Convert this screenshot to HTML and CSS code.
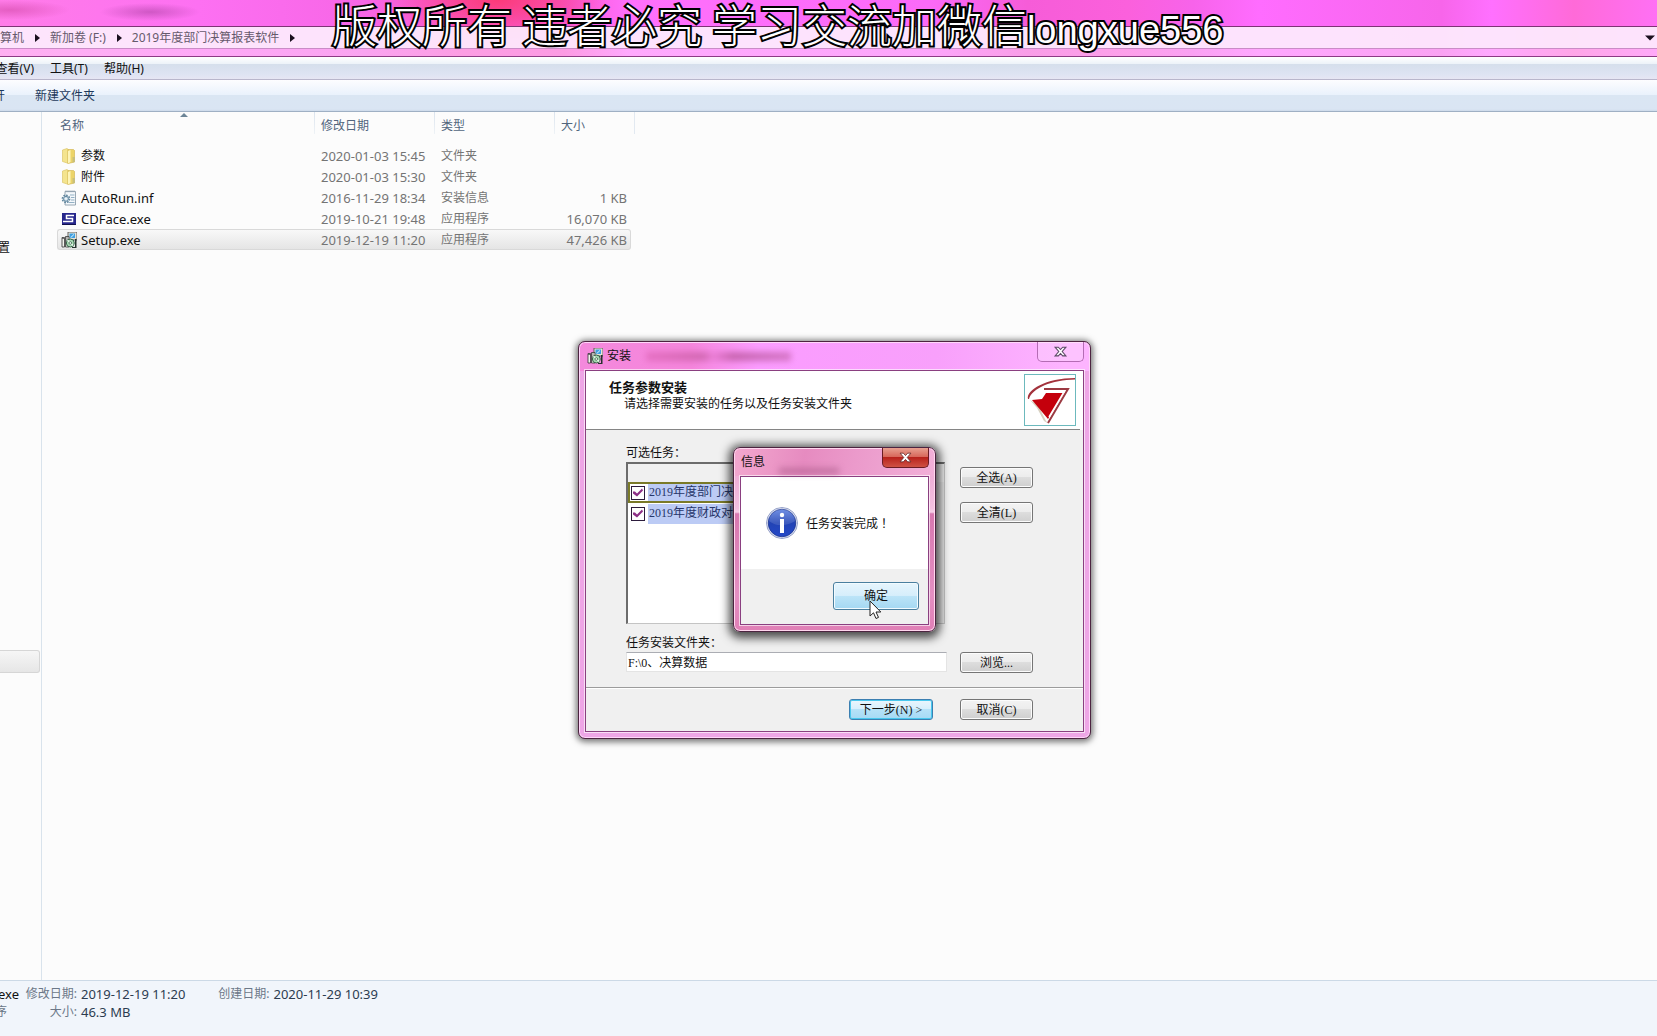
FILE: index.html
```html
<!DOCTYPE html>
<html lang="zh-CN">
<head>
<meta charset="utf-8">
<title>2019年度部门决算报表软件</title>
<link rel="stylesheet" href="styles.css">
</head>
<body>
<svg class="defs" aria-hidden="true">
  <symbol id="setup" viewBox="0 0 16 16">
    <rect x="7" y="0" width="9" height="8" fill="#e8e4d8" stroke="#444" stroke-width=".8"/>
    <rect x="8.5" y="1.5" width="5.5" height="4.5" fill="#3f9fe0"/>
    <path d="M9 5.5 13 1.8V3L10.5 5.5Z" fill="#bfe4fa"/>
    <path d="M14 7v8h-3v1h4.5V7Z" fill="#26332e"/>
    <path d="M1 5.5h2.5V15H1ZM4.5 4.5H8V15H4.5Z" fill="#f3f3ee" stroke="#333" stroke-width=".8"/>
    <path d="M1 6.5h2M5 6h2.500M5 8h2" stroke="#555" stroke-width=".8"/>
    <circle cx="9.300" cy="11" r="4" fill="#a9d8b4" stroke="#28563b" stroke-width=".9"/>
    <path d="M9.300 11 6.500 8.200M9.300 11l3 2.500" stroke="#eefcf0" stroke-width="1.200"/>
    <circle cx="9.300" cy="11" r="1.300" fill="#fff" stroke="#28563b" stroke-width=".7"/>
  </symbol>
  <symbol id="folder" viewBox="0 0 16 16">
    <path d="M1.500 2 6 .5l1 .8v14L1.500 13.500Z" fill="#f4e48e" stroke="#d8c05a" stroke-width=".6"/>
    <path d="M7 1.500h5.500l1 1V14L7 15.500Z" fill="#ecd468" stroke="#cfb04a" stroke-width=".6"/>
    <path d="M7 3 9.500 2v12L7 15.500Z" fill="#fdf4b8"/>
    <path d="M11.500 9h2.500v5l-2.500.6Z" fill="#c9c07a"/>
  </symbol>
</svg>

<div class="explorer">
  <header class="glass">
    <nav class="address" aria-label="地址栏">
      <span class="crumb-edge"><a href="#">算机</a></span>
      <i class="caret"></i>
      <a href="#">新加卷 (F:)</a>
      <i class="caret"></i>
      <a href="#">2019年度部门决算报表软件</a>
      <i class="caret"></i>
      <button class="history" aria-label="以前的位置"></button>
    </nav>
  </header>
  <nav class="menubar">
    <span class="menu-edge"><a href="#">查看(V)</a></span>
    <a href="#">工具(T)</a>
    <a href="#">帮助(H)</a>
  </nav>
  <div class="toolbar">
    <span class="tool-edge"><button>开</button></span>
    <button>新建文件夹</button>
  </div>
  <main class="panes">
    <aside class="tree">
      <div class="tree-item"><span>置</span></div>
      <div class="tree-selected"></div>
    </aside>
    <section class="list">
      <table class="files">
        <colgroup><col class="c-name"><col class="c-date"><col class="c-type"><col class="c-size"></colgroup>
        <thead>
          <tr><th class="sorted">名称</th><th>修改日期</th><th>类型</th><th>大小</th></tr>
        </thead>
        <tbody>
          <tr><td><div class="name cjk"><svg><use href="#folder"/></svg>参数</div></td><td>2020-01-03 15:45</td><td class="cjk">文件夹</td><td></td></tr>
          <tr><td><div class="name cjk"><svg><use href="#folder"/></svg>附件</div></td><td>2020-01-03 15:30</td><td class="cjk">文件夹</td><td></td></tr>
          <tr><td><div class="name"><svg viewBox="0 0 16 16">
            <path d="M4 1.500h10.500V15H4Z" fill="#f4f8fb" stroke="#8d9eac" stroke-width=".9"/>
            <path d="M5 .3v2M7 .3v2M9 .3v2M11 .3v2M13 .3v2" stroke="#8d9eac" stroke-width=".8"/>
            <path d="M9 5h4.500M10 7.500h3.500M10 10h3.500M8 12.500h5.500" stroke="#93b0c4"/>
            <circle cx="5" cy="8.800" r="3.600" fill="none" stroke="#62879f" stroke-width="1.600" stroke-dasharray="1.700 1.070"/>
            <circle cx="5" cy="8.800" r="2.500" fill="#c9dce8" stroke="#62879f"/><circle cx="5" cy="8.800" r=".9" fill="#fff"/>
          </svg>AutoRun.inf</div></td><td>2016-11-29 18:34</td><td class="cjk">安装信息</td><td>1 KB</td></tr>
          <tr><td><div class="name"><svg viewBox="0 0 16 16">
            <rect x="1" y="2" width="14" height="11" fill="#27278c"/><path d="M1 13h14v1H1z" fill="#12124e"/>
            <path d="M13 4.500H5.500v3h6v3H2" fill="none" stroke="#fff" stroke-width="1.500"/>
          </svg>CDFace.exe</div></td><td>2019-10-21 19:48</td><td class="cjk">应用程序</td><td>16,070 KB</td></tr>
          <tr class="selected"><td><div class="name"><svg><use href="#setup"/></svg>Setup.exe</div></td><td>2019-12-19 11:20</td><td class="cjk">应用程序</td><td>47,426 KB</td></tr>
        </tbody>
      </table>
    </section>
  </main>
  <footer class="details">
    <div class="file-edge"><span class="file">exe</span><span class="cjk">序</span></div>
    <dl>
      <dt>修改日期:</dt><dd>2019-12-19 11:20</dd>
      <dt>大小:</dt><dd>46.3 MB</dd>
    </dl>
    <dl>
      <dt>创建日期:</dt><dd>2020-11-29 10:39</dd>
    </dl>
  </footer>
</div>

<div class="watermark">版权所有 违者必究 学习交流加微信<span class="latin">longxue556</span></div>

<section class="window installer" aria-label="安装">
  <div class="titlebar">
    <svg class="title-icon"><use href="#setup"/></svg>
    <span>安装</span>
    <i class="smudge"></i>
    <button class="close" aria-label="关闭"><svg viewBox="0 0 12 10"><path d="M1 1h3l2 2.200L8 1h3L7.600 5 11 9H8L6 6.800 4 9H1l3.400-4Z"/></svg></button>
  </div>
  <div class="client">
    <div class="banner">
      <div class="banner-text">
        <h1>任务参数安装</h1>
        <p>请选择需要安装的任务以及任务安装文件夹</p>
      </div>
      <svg class="logo" viewBox="0 0 52 52">
        <rect x=".5" y=".5" width="51" height="51" fill="#fff" stroke="#6cb9bd"/>
        <path d="M6 26 14 31 22 47 25 50 20 47 13 34Z" fill="#d8d0c0"/>
        <path d="M4 25C2 16 22 4 51 4V5.500C28 6 8 14 5 25Z" fill="#a3323c"/>
        <path d="M8 26 18 25 22 19H40L24 45Z" fill="#c4000c"/>
        <path d="M20 15H44L24 49" fill="none" stroke="#9b3a42" stroke-width="2"/>
        <path d="M21 18H40L25 43" fill="none" stroke="#fff" stroke-width="1.500"/>
      </svg>
    </div>
    <form class="form" onsubmit="return false">
      <div class="fields">
        <div class="caption">可选任务：</div>
        <div class="tasks">
          <div class="tasks-head"></div>
          <label class="task focused"><input type="checkbox" checked><span>2019年度部门决</span></label>
          <label class="task"><input type="checkbox" checked><span>2019年度财政对</span></label>
        </div>
        <label class="caption folder-caption" for="folder-path">任务安装文件夹：</label>
        <input class="path" id="folder-path" type="text" value="F:\0、决算数据">
      </div>
      <div class="side">
        <button class="btn">全选(A)</button>
        <button class="btn">全清(L)</button>
        <button class="btn browse">浏览...</button>
      </div>
    </form>
    <div class="actions">
      <button class="btn next">下一步(N) &gt;</button>
      <button class="btn">取消(C)</button>
    </div>
  </div>
</section>

<section class="window message" role="dialog" aria-label="信息">
  <div class="titlebar">
    <span>信息</span>
    <i class="smudge"></i>
    <button class="close" aria-label="关闭"><svg viewBox="0 0 12 10"><path d="M1 1h3l2 2.200L8 1h3L7.600 5 11 9H8L6 6.800 4 9H1l3.400-4Z"/></svg></button>
  </div>
  <div class="client">
    <div class="body">
      <svg class="info" viewBox="0 0 32 32">
        <defs><linearGradient id="ib" x1="0" y1="0" x2="0" y2="1"><stop offset="0" stop-color="#5b7fe0"/><stop offset=".5" stop-color="#2243b4"/><stop offset="1" stop-color="#2448c8"/></linearGradient></defs>
        <circle cx="16" cy="16" r="15.500" fill="#e4e8f4" stroke="#7f8dbd" stroke-width=".8"/>
        <circle cx="16" cy="16" r="13.800" fill="url(#ib)" stroke="#1c3590" stroke-width=".8"/>
        <path d="M3 14A13 13 0 0 1 29 14C22 19 10 20 3 14Z" fill="#fff" opacity=".13"/>
        <circle cx="16" cy="8" r="2.200" fill="#fff"/><rect x="14" y="12" width="4" height="14" fill="#fff"/>
      </svg>
      <p>任务安装完成<span class="mark" lang="zh-TW">！</span></p>
    </div>
    <div class="foot"><button class="ok">确定</button></div>
  </div>
</section>

<svg class="cursor" viewBox="0 0 13 20" aria-hidden="true"><path d="M1 1V16L4.500 12.800 7 18.500 9.500 17.400 7 12H11.800Z" fill="#fff" stroke="#222"/></svg>
</body>
</html>
```
FILE: styles.css
```css
* { box-sizing: border-box; }

body {
  margin: 0;
  position: relative;
  overflow: hidden;
  font: 12px/16px "Noto Sans", "Noto Sans CJK SC", sans-serif;
  color: #111;
}

button, input { font: inherit; color: inherit; }
a { color: inherit; text-decoration: none; white-space: nowrap; }
p, h1, dl, dd { margin: 0; }
.defs { position: absolute; width: 0; height: 0; }

/* Explorer window */
.explorer {
  display: flex;
  flex-direction: column;
  height: 100vh;
  background: #fcfcfc;
}

.glass {
  padding: 26px 0 7px;
  background:
    radial-gradient(ellipse 60px 10px at 10px 10px, #d84fb0aa, transparent),
    radial-gradient(ellipse 50px 9px at 150px 12px, #a83fa088, transparent),
    radial-gradient(ellipse 110px 40px at 30% 0, #fb3a78, #fb3a7800),
    linear-gradient(#0000 49px, #ffffff66 49px),
    linear-gradient(90deg, #ff7ce8 0, #fd70f2 12%, #f766e6 22%, #fa5cd0 28%, #fa58d0 34%, #ff70fc 38%, #fb6af8 56%, #f65cd8 62%, #fb60dc 68%, #f763ea 72%, #ff6cff 76%, #f765ea 87%, #ff70ff 90%, #ff6ad8 95%, #ff70f4 100%);
  border-bottom: 1px solid #8c3a84;
}

.address {
  display: flex;
  align-items: center;
  height: 23px;
  border-top: 1px solid #7c3474;
  border-bottom: 1px solid #c98cc6;
  background: #fdedfdec;
  color: #665a6c;
}

.crumb-edge { width: 24px; display: flex; justify-content: flex-end; }

.caret {
  margin: 0 10px 0 11px;
  border: 4px solid transparent;
  border-left: 5px solid #1a0f1e;
  border-right: 0;
  width: 0;
}

.history {
  margin-left: auto;
  width: 14px;
  height: 20px;
  padding: 0;
  border: 0;
  background: #1a0f1e;
  clip-path: polygon(2px 8px, 12px 8px, 7px 13px);
}

.menubar {
  display: flex;
  align-items: center;
  gap: 16px;
  height: 23px;
  padding-top: 2px;
  background: linear-gradient(#fff, #eef3f9 30%, #d6dfec 34%, #dde3f2 75%, #e6e6f4);
  border-bottom: 1px solid #b9b6cc;
}

.menu-edge { width: 34px; display: flex; justify-content: flex-end; }

.toolbar {
  display: flex;
  align-items: center;
  gap: 30px;
  height: 32px;
  background: linear-gradient(#fdfdff, #eaf2fc 47%, #dae6f3 49%, #dae5f3 94%, #cddaea);
  border-bottom: 1px solid #9fb0c4;
  color: #1e395b;
}

.toolbar button { padding: 0; border: 0; background: none; white-space: nowrap; }
.tool-edge { width: 5px; display: flex; justify-content: flex-end; }

.panes { flex: 1; display: flex; min-height: 0; }

.tree {
  width: 42px;
  padding-top: 128px;
  border-right: 1px solid #d9e3ec;
}

.tree-item { width: 10px; display: flex; justify-content: flex-end; }

.tree-selected {
  height: 23px;
  margin: 394px 1px 0 0;
  border: 1px solid #d6d6d6;
  border-left: 0;
  border-radius: 0 3px 3px 0;
  background: linear-gradient(#f6f6f6, #e6e6e6);
}

.list { flex: 1; padding-left: 15px; }

.files {
  width: 574px;
  table-layout: fixed;
  border-collapse: separate;
  border-spacing: 0;
  color: #747474;
}

.c-name { width: 257px; }
.c-date, .c-type { width: 120px; }

.files th {
  position: relative;
  height: 33px;
  padding: 0 0 6px 7px;
  text-align: left;
  font-weight: 400;
  color: #51657d;
  background: linear-gradient(#dbe4ee, #eef2f6) 0 0 / 1px 22px no-repeat;
}

.files th:first-child { padding-left: 3px; background: none; }

.files th:last-child::after {
  content: "";
  position: absolute;
  top: 0;
  right: -4px;
  width: 1px;
  height: 22px;
  background: #e2e9f1;
}

.sorted::after {
  content: "";
  position: absolute;
  left: 48%;
  top: 1px;
  border: 4px solid transparent;
  border-top: 0;
  border-bottom-color: #6d8597;
}

.files td { height: 21px; padding: 0 0 0 7px; font-size: 13px; line-height: 18px; white-space: nowrap; }
.files td:first-child { padding-left: 4px; }
.files td:last-child { padding: 0 4px 0 0; text-align: right; }
.files td.cjk, .cjk { font-size: 12px; }

.name { display: flex; align-items: center; gap: 4px; color: #111; }
.name svg { width: 16px; height: 16px; }

.selected td {
  border: solid #d9d9d9;
  border-width: 1px 0;
  background: linear-gradient(#f8f8f8, #e5e5e5);
}
.files .selected td:first-child { border-left-width: 1px; border-radius: 3px 0 0 3px; padding-left: 3px; }
.files .selected td:last-child { border-right-width: 1px; border-radius: 0 3px 3px 0; padding-right: 3px; }

.details {
  display: flex;
  height: 56px;
  padding-top: 4px;
  border-top: 1px solid #ccd9e6;
  background: #f1f5fb;
  font-size: 13px;
  line-height: 18px;
  color: #6c7888;
}

.file-edge { display: flex; flex-direction: column; width: 25px; white-space: nowrap; }
.file-edge .file { width: 19px; display: flex; justify-content: flex-end; color: #111; }
.file-edge .cjk { width: 7px; display: flex; justify-content: flex-end; }

.details dl {
  display: grid;
  grid-template-columns: 52px auto;
  grid-auto-rows: 18px;
  column-gap: 4px;
  margin-right: 32px;
}
.details dt { font-size: 12px; text-align: right; }
.details dd { color: #2c3c50; }

/* Overlay caption */
.watermark {
  position: absolute;
  left: 332px;
  top: 0;
  font: 300 45px/48px "Noto Sans CJK SC", sans-serif;
  white-space: nowrap;
  color: #fff;
  -webkit-text-stroke: 4px #000;
  paint-order: stroke fill;
}
.latin { font: 400 38px/48px "Liberation Sans", sans-serif; }

/* Floating windows */
.window {
  position: absolute;
  display: flex;
  flex-direction: column;
  padding: 0 6px 6px;
  border: 1px solid #4c2440;
  border-radius: 7px;
}

.titlebar { display: flex; align-items: center; white-space: nowrap; }
.title-icon { width: 16px; height: 16px; }

.client {
  flex: 1;
  display: flex;
  flex-direction: column;
  border: 1px solid #8a3f80;
  outline: 1px solid #ffffffa0;
  background: #f0f0f0;
}

.close {
  align-self: flex-start;
  flex: none;
  width: 47px;
  height: 20px;
  margin-left: auto;
  padding: 0;
  border: 1px solid #b46cb4;
  border-top: 0;
  border-radius: 0 0 5px 5px;
  background: #ffffff30;
}
.close svg { display: block; width: 13px; height: 11px; margin: auto; overflow: visible; }
.close path { fill: #fff; stroke: #5c4a66; }

.smudge { height: 9px; filter: blur(3px); }

.installer {
  left: 578px;
  top: 341px;
  width: 513px;
  height: 398px;
  background: linear-gradient(90deg, #f489dc 0, #f585dc 22%, #fb9cff 35%, #f8a0fb 70%, #fdb4ff 95%) 0 0 / 100% 29px no-repeat, #eea6e6;
  box-shadow: inset 0 0 0 1px #ffd6fa, 0 1px 6px 2px #00000088;
}
.installer .titlebar { height: 28px; padding-left: 2px; gap: 4px; }
.installer .smudge { width: 145px; margin-left: 11px; opacity: .7; background: linear-gradient(90deg, #e066b8, #c25a9e 40%, #e878d0 46%, #b24f92 60%, #c765b0); }

.banner {
  display: flex;
  justify-content: space-between;
  height: 59px;
  margin-right: 3px;
  padding: 3px 4px 0 23px;
  border-bottom: 1px solid #858585;
  background: #fff;
  box-shadow: 3px 0 #fff;
}
.banner-text { padding-top: 4px; }
.banner h1 { font-size: 13px; line-height: 18px; font-weight: 700; }
.banner p { padding-left: 15px; }
.logo { width: 52px; height: 52px; }

.form { display: flex; gap: 13px; height: 257px; padding: 14px 0 0 40px; }
.fields { width: 321px; display: flex; flex-direction: column; }
.caption { height: 18px; line-height: 18px; }

.tasks {
  height: 162px;
  margin-right: 2px;
  border: 1px solid #c4c4c4;
  border-top: 2px solid #6c6c6c;
  border-left: 2px solid #6c6c6c;
  background: linear-gradient(#e8e8e8, #e8e8e8) 100% 0 / 17px 100% no-repeat, #fff;
}
.tasks-head { height: 18px; background: #f0f0f0; }

.task { display: flex; align-items: center; gap: 3px; height: 21px; padding-left: 2px; font-family: "Liberation Serif", "Noto Sans CJK SC", serif; margin-right: 17px; }
.task span { flex: 1; height: 20px; line-height: 19px; padding-left: 1px; background: #bccbf5; color: #27366a; }
.task.focused { border: 2px solid #7a7a28; padding-left: 0; }
.task.focused span { height: 17px; line-height: 17px; }

.task input {
  appearance: none;
  width: 14px;
  height: 14px;
  margin: 0 0 0 1px;
  border: 1px solid #2c1c3c;
  background: #fff;
}
.task input:checked::before {
  content: "";
  display: block;
  width: 12px;
  height: 12px;
  background: #8c2f86;
  clip-path: polygon(1px 5px, 3px 5px, 5px 7px, 10px 2px, 11px 4px, 5px 10px, 1px 7px);
}

.folder-caption { margin-top: 10px; }

.path {
  width: 100%;
  height: 20px;
  padding: 0 1px;
  border: 1px solid #e4e4e4;
  border-top-color: #abadb3;
  background: #fff;
  font-family: "Liberation Serif", "Noto Sans CJK SC", serif;
}

.side { display: flex; flex-direction: column; gap: 14px; padding-top: 23px; }

.btn {
  width: 73px;
  height: 21px;
  padding: 0;
  border: 1px solid #757575;
  border-radius: 3px;
  background: linear-gradient(#f3f3f3, #ececec 48%, #dddddd 50%, #cfcfcf);
  box-shadow: inset 0 0 0 1px #fcfcfc;
  font-family: "Liberation Serif", "Noto Sans CJK SC", serif;
  line-height: 18px;
}
.browse { margin-top: 115px; }

.actions {
  flex: 1;
  display: flex;
  justify-content: flex-end;
  gap: 27px;
  padding: 11px 50px 0 0;
  border-top: 1px solid #9c9c9c;
  box-shadow: inset 0 1px #fff;
}
.next {
  width: 84px;
  border-color: #3c7fb1;
  background: linear-gradient(#eaf6fd, #d6effc 48%, #b5e2f8 50%, #a5daf5);
  box-shadow: inset 0 0 0 1px #48c8ee;
}

.message {
  left: 733px;
  top: 447px;
  width: 203px;
  height: 185px;
  background:
    linear-gradient(100deg, #f3a8cf 0, #e68bc0 35%, #eb9acb 60%, #f2b0d8 100%) 0 0 / 100% 28px no-repeat,
    linear-gradient(#eb9fcd, #f3c0e0 33%, #f7d0e8 35%, #d878b0 36%, #e48fc2 80%, #e07fb6);
  box-shadow: inset 0 0 0 1px #ffd6ee, 0 2px 10px 4px #000000b0;
}
.message .titlebar { height: 28px; padding-left: 1px; }
.message .smudge { width: 60px; height: 6px; margin: 18px 0 0 14px; background: #8a3f6c66; }
.message .close { border-color: #6a1c24; background: linear-gradient(#e8a090, #d8695c 45%, #b8231c 50%, #cf5144); }
.message .close path { stroke: #5a2020; stroke-width: .7px; }

.body {
  display: flex;
  align-items: center;
  gap: 8px;
  height: 92px;
  padding-left: 25px;
  background: #fff;
}
.info { width: 32px; height: 32px; }
.mark { font-family: "Noto Sans CJK TC", sans-serif; }

.foot { flex: 1; display: flex; justify-content: flex-end; padding: 13px 9px 0 0; }
.ok {
  width: 86px;
  height: 28px;
  padding: 0;
  border: 1px solid #4a7f9f;
  border-radius: 3px;
  background: linear-gradient(#e6f5fd, #d6eefb 48%, #bce4f8 50%, #a4d8f2);
  box-shadow: inset 0 0 0 1px #f2fbff;
}

.cursor { position: absolute; left: 869px; top: 600px; width: 13px; height: 20px; }
```
